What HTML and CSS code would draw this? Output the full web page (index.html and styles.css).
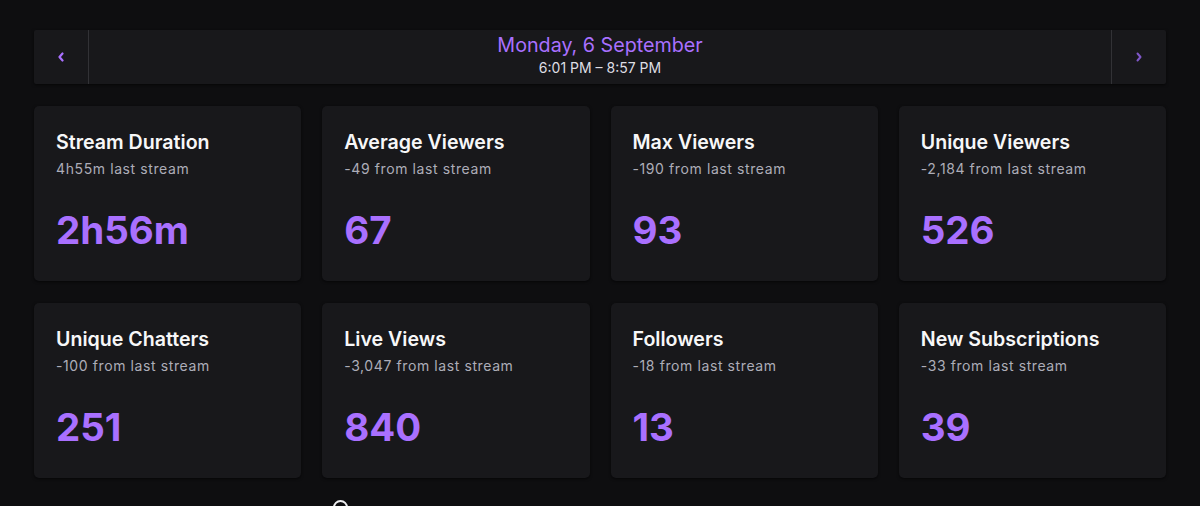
FILE: index.html
```html
<!DOCTYPE html>
<html lang="en">
  <head>
    <meta charset="UTF-8" />
    <meta name="viewport" content="width=device-width, initial-scale=1.0" />
    <title>Stream Summary</title>
    <link rel="stylesheet" href="styles.css">
  </head>
  <body>
    <div class="page">
      <div class="date-bar">
        <div class="nav-btn" id="prev">
          <svg width="8" height="10" viewBox="0 0 8 10"><path d="M5.5 1.5 L2.5 5 L5.5 8.5" fill="none" stroke="#a970ff" stroke-width="2.2" stroke-linecap="round" stroke-linejoin="round"/></svg>
        </div>
        <div class="date-info">
          <div class="date">Monday, 6 September</div>
          <div class="time">6:01 PM – 8:57 PM</div>
        </div>
        <div class="nav-btn right" id="next">
          <svg width="8" height="10" viewBox="0 0 8 10"><path d="M2.5 1.5 L5.5 5 L2.5 8.5" fill="none" stroke="#8057c9" stroke-width="2" stroke-linecap="round" stroke-linejoin="round"/></svg>
        </div>
      </div>

      <div class="stats">
        <div class="card">
          <div class="title">Stream Duration</div>
          <div class="sub">4h55m last stream</div>
          <div class="value">2h56m</div>
        </div>
        <div class="card">
          <div class="title">Average Viewers</div>
          <div class="sub">-49 from last stream</div>
          <div class="value">67</div>
        </div>
        <div class="card">
          <div class="title">Max Viewers</div>
          <div class="sub">-190 from last stream</div>
          <div class="value">93</div>
        </div>
        <div class="card">
          <div class="title">Unique Viewers</div>
          <div class="sub">-2,184 from last stream</div>
          <div class="value">526</div>
        </div>
        <div class="card">
          <div class="title">Unique Chatters</div>
          <div class="sub">-100 from last stream</div>
          <div class="value">251</div>
        </div>
        <div class="card">
          <div class="title">Live Views</div>
          <div class="sub">-3,047 from last stream</div>
          <div class="value">840</div>
        </div>
        <div class="card">
          <div class="title">Followers</div>
          <div class="sub">-18 from last stream</div>
          <div class="value">13</div>
        </div>
        <div class="card">
          <div class="title">New Subscriptions</div>
          <div class="sub">-33 from last stream</div>
          <div class="value">39</div>
        </div>
      </div>

      <div class="footer-row">
        <span class="info-icon"></span>
      </div>
    </div>
  </body>
</html>
```

FILE: styles.css
```css
* {
  box-sizing: border-box;
}
body {
  margin: 0;
  background-color: #0e0e10;
  font-family: Inter, "Noto Sans", sans-serif;
  color: #efeff1;
  overflow: hidden;
}
.page {
  width: 1132px;
  margin: 0 auto;
  padding-top: 30px;
}

/* date selector */
.date-bar {
  height: 54px;
  display: flex;
  background-color: #18181b;
  border-radius: 2px;
  box-shadow: 0 1px 3px rgba(0, 0, 0, 0.6);
}
.nav-btn {
  width: 55px;
  display: flex;
  justify-content: center;
  align-items: center;
  border-right: 1px solid #323236;
}
.nav-btn.right {
  border-right: none;
  border-left: 1px solid #323236;
}
.date-info {
  flex: 1;
  display: flex;
  flex-direction: column;
  align-items: center;
  padding-top: 4px;
}
.date {
  font-size: 19.7px;
  line-height: 22px;
  color: #a970ff;
}
.time {
  margin-top: 3px;
  font-size: 14px;
  line-height: 18px;
  color: #dedee3;
}

/* stat cards */
.stats {
  margin-top: 22px;
  display: grid;
  grid-template-columns: repeat(4, 1fr);
  column-gap: 21px;
  row-gap: 22px;
}
.card {
  height: 175px;
  background-color: #18181b;
  border-radius: 5px;
  padding: 24px 22px 0 22px;
  box-shadow: 0 1px 3px rgba(0, 0, 0, 0.6);
}
.title {
  font-size: 19.6px;
  line-height: 24px;
  font-weight: 600;
  color: #f7f7f8;
}
.sub {
  margin-top: 5px;
  font-size: 14px;
  line-height: 20px;
  letter-spacing: 0.6px;
  color: #adadb8;
}
.value {
  margin-top: 27px;
  font-size: 38.5px;
  line-height: 48px;
  font-weight: 700;
  color: #a970ff;
}

.footer-row {
  padding: 22px 0 0 299px;
}
.info-icon {
  display: block;
  width: 15px;
  height: 15px;
  border: 2px solid #efeff1;
  border-radius: 50%;
}
```
